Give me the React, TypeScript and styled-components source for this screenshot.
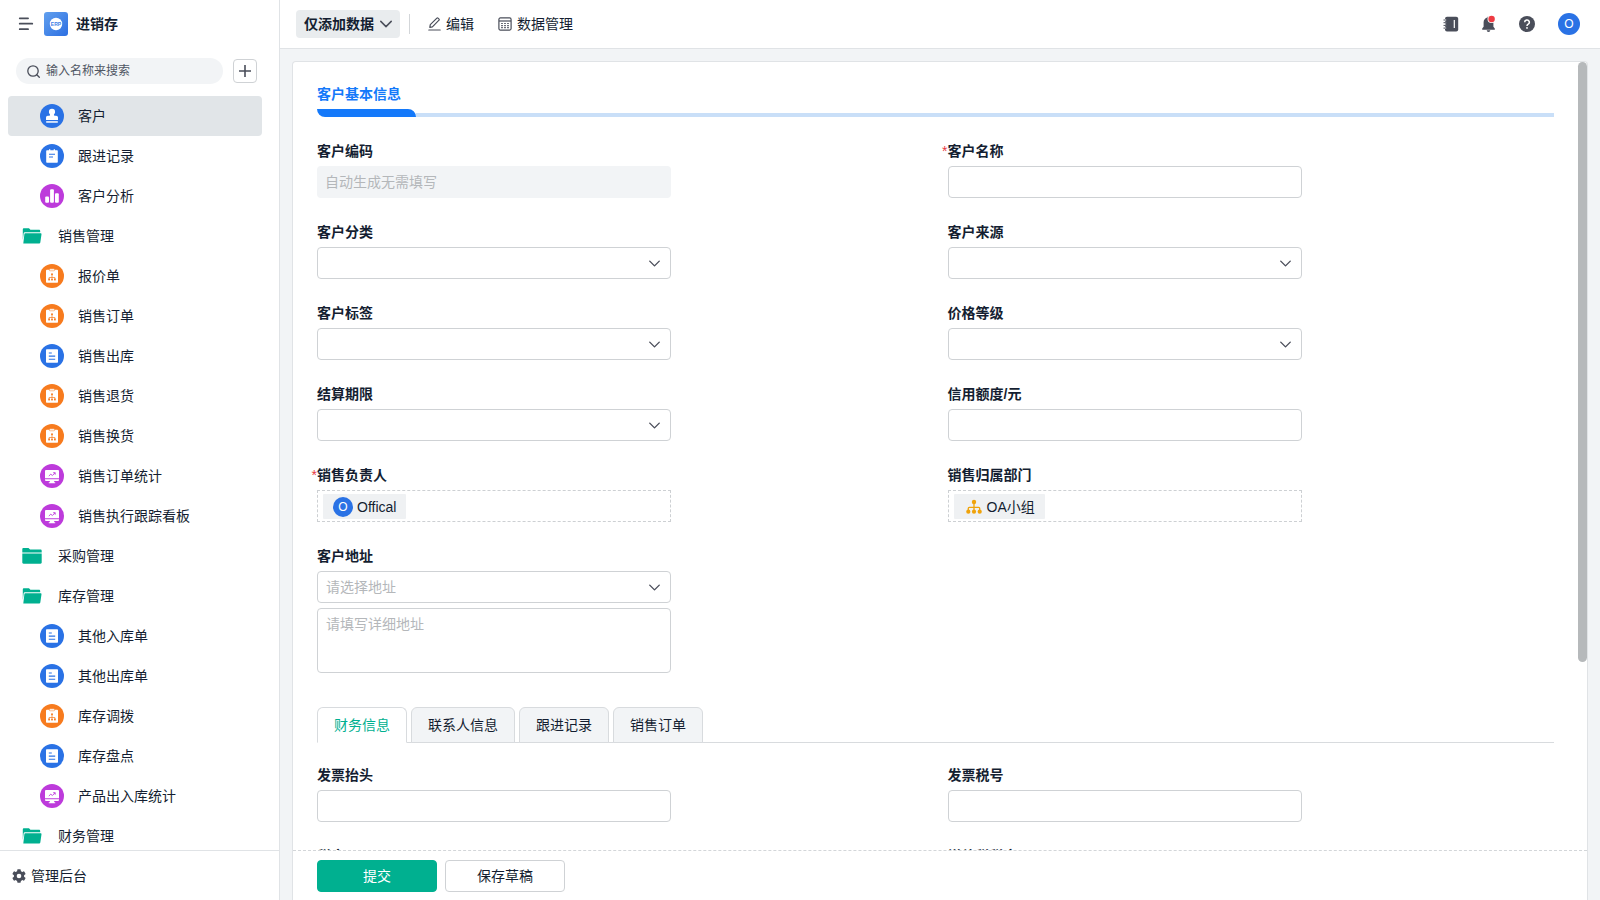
import React, { useState } from "react";
import styled, { createGlobalStyle, css } from "styled-components";

const color = {
  text: "#141e31",
  icon: "#4a4e5a",
  line: "#e0e3e6",
  fieldLine: "#cfd2d5",
  hint: "#b4b7ba",
  panel: "#f2f4f6",
  green: "#00b090",
  blue: "#2a72e5",
  azure: "#1479fa",
  orange: "#f77b1e",
  purple: "#bd3bdb",
};

const GlobalStyle = createGlobalStyle`
  *, *::before, *::after { box-sizing: border-box; }
  body {
    margin: 0;
    color: ${color.text};
    font: 14px/20px "Liberation Sans", "Noto Sans CJK SC", sans-serif;
  }
  button, input, select, textarea { font: inherit; color: inherit; }
  button { border: 0; padding: 0; background: none; cursor: pointer; }
`;

const Shell = styled.div`
  display: grid;
  grid-template-columns: 280px minmax(0, 1fr);
  height: 100vh;
  background: ${color.panel};
`;

/* ---------- sidebar ---------- */

const Sidebar = styled.aside`
  display: flex;
  flex-direction: column;
  min-height: 0;
  background: #fff;
  border-right: 1px solid ${color.line};
`;

const Brand = styled.div`
  display: flex;
  align-items: center;
  height: 48px;
  padding-left: 18px;
  flex: none;
`;

const IconButton = styled.button`
  display: flex;
  align-items: center;
  color: ${color.icon};
`;

const BrandLogo = styled.svg`
  margin: 0 8px 0 10px;
`;

const BrandName = styled.h1`
  margin: 0;
  font-size: 14px;
  line-height: 20px;
  font-weight: 700;
`;

const SearchRow = styled.div`
  display: flex;
  align-items: center;
  gap: 10px;
  padding: 10px 22px 12px 16px;
  flex: none;
`;

const SearchBox = styled.label`
  display: flex;
  align-items: center;
  flex: 1;
  gap: 6px;
  height: 26px;
  padding-left: 11px;
  border-radius: 13px;
  background: ${color.panel};
  color: ${color.icon};
`;

const SearchInput = styled.input`
  flex: 1;
  min-width: 0;
  padding: 0;
  border: 0;
  outline: 0;
  background: none;
  font-size: 12px;
  line-height: 20px;
  &::placeholder { color: #4f5663; opacity: 1; }
`;

const AddButton = styled(IconButton)`
  justify-content: center;
  width: 24px;
  height: 24px;
  border: 1px solid ${color.fieldLine};
  border-radius: 4px;
`;

const Nav = styled.nav`
  flex: 1;
  min-height: 0;
  overflow: hidden;
  padding: 0 17px 0 8px;
`;

const NavLink = styled.a<{ $folder?: boolean; $active?: boolean }>`
  display: flex;
  align-items: center;
  gap: ${(p) => (p.$folder ? 16 : 14)}px;
  height: 40px;
  padding-left: ${(p) => (p.$folder ? 14 : 32)}px;
  border-radius: 4px;
  background: ${(p) => (p.$active ? "#e1e5e8" : "transparent")};
  color: inherit;
  text-decoration: none;
`;

const AdminLink = styled.a`
  display: flex;
  align-items: center;
  gap: 5px;
  flex: none;
  height: 50px;
  padding-left: 12px;
  border-top: 1px solid ${color.line};
  color: inherit;
  text-decoration: none;
  svg { color: ${color.icon}; }
`;

/* ---------- top bar ---------- */

const Main = styled.main`
  display: flex;
  flex-direction: column;
  min-width: 0;
  min-height: 0;
`;

const TopBar = styled.header`
  display: flex;
  align-items: center;
  justify-content: space-between;
  flex: none;
  height: 49px;
  padding: 0 20px 0 16px;
  border-bottom: 1px solid ${color.line};
  background: #fff;
`;

const Tools = styled.div`
  display: flex;
  align-items: center;
  gap: 24px;
`;

const ModeButton = styled.button`
  display: flex;
  align-items: center;
  gap: 6px;
  height: 28px;
  padding: 0 8px;
  border-radius: 4px;
  background: #e9ecee;
  font-weight: 700;
  svg { color: ${color.icon}; }
`;

const ModeGroup = styled.div`
  display: flex;
  align-items: center;
  gap: 9px;
  margin-right: -6px;
`;

const Divider = styled.span`
  width: 1px;
  height: 20px;
  background: #d3d6d9;
`;

const ToolButton = styled.button`
  display: flex;
  align-items: center;
  gap: 5px;
  svg { color: ${color.icon}; }
`;

const Actions = styled.div`
  display: flex;
  align-items: center;
  gap: 22px;
`;

const Avatar = styled.span<{ $size: number }>`
  display: inline-flex;
  align-items: center;
  justify-content: center;
  width: ${(p) => p.$size}px;
  height: ${(p) => p.$size}px;
  border-radius: 50%;
  background: ${color.blue};
  color: #fff;
  font-size: 12px;
`;

const Account = styled.button`
  display: flex;
  margin-left: 1px;
`;

/* ---------- form card ---------- */

const Card = styled.form`
  position: relative;
  display: flex;
  flex-direction: column;
  flex: 1;
  min-height: 0;
  margin: 12px 12px 0;
  border: 1px solid ${color.line};
  border-bottom: 0;
  border-radius: 4px 4px 0 0;
  background: #fff;
`;

const ScrollArea = styled.div`
  flex: 1;
  min-height: 0;
  overflow: hidden;
  padding: 22px 33px 0 24px;
`;

const ScrollThumb = styled.div`
  position: absolute;
  top: 0;
  right: 0;
  width: 9px;
  height: 600px;
  border-radius: 5px;
  background: #b6b9bb;
`;

const SectionTitle = styled.h2`
  margin: 0 0 24px;
  font-size: 14px;
  line-height: 20px;
  font-weight: 700;
  color: ${color.azure};
`;

const SectionRule = styled.span`
  display: flex;
  align-items: flex-end;
  height: 8px;
  margin-top: 5px;
  &::before {
    content: "";
    width: 99px;
    height: 8px;
    border-radius: 0 8px 0 8px;
    background: ${color.azure};
  }
  &::after {
    content: "";
    flex: 1;
    height: 4px;
    background: #c9dff8;
  }
`;

const FieldGrid = styled.div`
  display: grid;
  grid-template-columns: repeat(2, minmax(0, 1fr));
  gap: 24px;
`;

const FieldBox = styled.div`
  display: flex;
  flex-direction: column;
  gap: 5px;
  max-width: 354px;
`;

const FieldLabel = styled.label<{ $required?: boolean }>`
  position: relative;
  font-weight: 700;
  ${(p) =>
    p.$required &&
    css`
      &::before {
        content: "*";
        position: absolute;
        right: 100%;
        color: #e8393f;
        font-weight: 400;
      }
    `}
`;

const control = css`
  display: block;
  width: 100%;
  border: 1px solid ${color.fieldLine};
  border-radius: 4px;
  background: #fff;
  padding: 0 8px;
  outline: 0;
  &::placeholder { color: ${color.hint}; opacity: 1; }
  &:focus { border-color: ${color.green}; }
`;

const TextInput = styled.input`
  ${control}
  height: 32px;
  &:disabled {
    border: 0;
    background: ${color.panel};
  }
`;

const SelectWrap = styled.div`
  position: relative;
  svg {
    position: absolute;
    right: 11px;
    top: 11px;
    color: ${color.icon};
    pointer-events: none;
  }
`;

const Select = styled.select<{ $hint?: boolean }>`
  ${control}
  appearance: none;
  height: 32px;
  color: ${(p) => (p.$hint ? color.hint : "inherit")};
`;

const TextArea = styled.textarea`
  ${control}
  height: 65px;
  padding: 5px 8px;
  resize: none;
`;

const MemberBox = styled.div`
  display: flex;
  align-items: flex-end;
  height: 32px;
  padding: 2px 5px;
  border: 1px dashed #cdd0d3;
`;

const Chip = styled.span<{ $org?: boolean }>`
  display: inline-flex;
  align-items: center;
  gap: ${(p) => (p.$org ? 5 : 4)}px;
  height: 25px;
  padding: 0 10px;
  background: #eff1f3;
  border-radius: 1px;
  svg { margin-left: 2px; }
`;

const TabList = styled.div`
  display: flex;
  gap: 4px;
  margin: 34px 0 22px;
  border-bottom: 1px solid #d8dbde;
`;

const Tab = styled.button<{ $active: boolean }>`
  height: 36px;
  margin-bottom: -1px;
  padding: 0 16px;
  border: 1px solid #d8dbde;
  border-bottom-color: ${(p) => (p.$active ? "#fff" : "#d8dbde")};
  border-radius: 6px 6px 0 0;
  background: ${(p) => (p.$active ? "#fff" : color.panel)};
  color: ${(p) => (p.$active ? color.green : "inherit")};
`;

const FormFooter = styled.footer`
  display: flex;
  gap: 8px;
  flex: none;
  height: 50px;
  padding: 9px 24px;
  border-top: 1px dashed #d3d6d9;
`;

const Button = styled.button<{ $primary?: boolean }>`
  width: 120px;
  height: 32px;
  border: 1px solid ${(p) => (p.$primary ? color.green : color.fieldLine)};
  border-radius: 4px;
  background: ${(p) => (p.$primary ? color.green : "#fff")};
  color: ${(p) => (p.$primary ? "#fff" : "inherit")};
`;

/* ---------- icons ---------- */

const Chevron = ({ size = 11 }: { size?: number }) => (
  <svg width={size} height={size} viewBox="0 0 12 12" fill="none" stroke="currentColor" strokeWidth="1.5" strokeLinecap="round" strokeLinejoin="round" aria-hidden>
    <path d="M0.8 3.4 6 8.6l5.2-5.2" />
  </svg>
);

type Kind = "stamp" | "note" | "bars" | "flow" | "doc" | "board";

const kindColor: Record<Kind, string> = {
  stamp: color.blue,
  note: color.blue,
  doc: color.blue,
  flow: color.orange,
  bars: color.purple,
  board: color.purple,
};

const KindIcon = ({ kind }: { kind: Kind }) => {
  const c = kindColor[kind];
  return (
    <svg width="24" height="24" viewBox="0 0 24 24" aria-hidden>
      <circle cx="12" cy="12" r="12" fill={c} />
      {kind === "stamp" && (
        <g fill="#fff">
          <path d="M12 4.8a3.1 3.1 0 0 1 3.1 3.1c0 1.5-1.2 2-1.2 3 0 .5.3.8 1 .8h1.300a1.800 1.800 0 0 1 1.800 1.800V16H6v-2.500a1.800 1.800 0 0 1 1.800-1.800h1.300c.7 0 1-.3 1-.8 0-1-1.200-1.500-1.200-3A3.1 3.1 0 0 1 12 4.8z" />
          <rect x="6.2" y="17.2" width="11.6" height="1.5" />
        </g>
      )}
      {kind === "note" && (
        <>
          <path d="M7 6.2h2v-1h1.3v1h3.4v-1H15v1h2a.8.8 0 0 1 .8.8v11a.8.8 0 0 1-.8.8H7a.8.8 0 0 1-.8-.8V7a.8.8 0 0 1 .8-.8z" fill="#fff" />
          <path d="M9 10.200h6M9 13h4" stroke={c} strokeWidth="1.1" />
        </>
      )}
      {kind === "bars" && (
        <g fill="#fff">
          <rect x="5.2" y="12.5" width="3.8" height="6.3" rx="1" />
          <rect x="10.1" y="5.2" width="3.8" height="13.6" rx="1" />
          <rect x="15" y="9.2" width="3.8" height="9.6" rx="1" />
        </g>
      )}
      {kind === "doc" && (
        <>
          <rect x="6" y="5.2" width="12" height="13.6" rx="0.8" fill="#fff" />
          <path d="M8.800 9h3M8.800 12.100h6.400M8.800 15.200h6.400" stroke={c} strokeWidth="1.1" />
        </>
      )}
      {kind === "flow" && (
        <>
          <rect x="6" y="5.8" width="12" height="13" rx="0.8" fill="#fff" />
          <rect x="9.400" y="4.800" width="5.2" height="2" rx="0.6" fill="#fff" stroke={c} strokeWidth="0.5" />
          <path d="M12 10.500v3.800M9.100 15.200v-1.700h5.800v1.700" stroke={c} strokeWidth="0.7" fill="none" />
          <g fill={c}>
            <circle cx="12" cy="10.3" r="1" />
            <rect x="8.2" y="14.6" width="1.8" height="1.8" />
            <rect x="11.1" y="14.6" width="1.8" height="1.8" />
            <rect x="14" y="14.6" width="1.8" height="1.8" />
          </g>
        </>
      )}
      {kind === "board" && (
        <>
          <path d="M6 6h12a1 1 0 0 1 1 1v7.300H5V7a1 1 0 0 1 1-1z" fill="#fff" />
          <path d="M5 15.200h14v.8a1 1 0 0 1-1 1h-3.800v1.200h1v1H8.800v-1h1V17H6a1 1 0 0 1-1-1z" fill="#fff" />
          <path d="m8.800 12 2-1.800 1.600 1.300 2.600-2.600m-1.800-.2h2v2" stroke={c} strokeWidth="0.9" fill="none" />
        </>
      )}
    </svg>
  );
};

const FolderIcon = ({ open }: { open: boolean }) => (
  <svg width="20" height="20" viewBox="0 0 20 20" fill={color.green} aria-hidden>
    {open ? (
      <>
        <path d="M0.800 14V3.500c0-.7.500-1.200 1.200-1.200h5l1.400 1.500H17c.7 0 1.200.5 1.200 1.200v1.200H2.800c-.6 0-1 .4-1.100.9z" />
        <path d="M3.300 7.200h15.300c.6 0 1 .5.900 1.100l-1.200 8.200c-.1.600-.5 1-1.100 1H1.300l1.100-9.500c0-.5.400-.8.900-.8z" />
      </>
    ) : (
      <>
        <path d="M0.300 6.400V3.300c0-.7.500-1.200 1.200-1.200h5l1.600 1.500h10.400c.7 0 1.200.5 1.200 1.200v1.600z" />
        <path d="M0.300 7.400h19.400v9.100c0 .7-.5 1.200-1.200 1.200h-17c-.7 0-1.200-.5-1.200-1.200z" />
      </>
    )}
  </svg>
);

const OrgIcon = () => (
  <svg width="16" height="16" viewBox="0 0 16 16" aria-hidden>
    <path d="M8 3v10M2.300 13V9.300c0-.6.400-1 1-1h9.400c.6 0 1 .4 1 1V13" stroke="#f0a30a" strokeWidth="1.3" fill="none" />
    <g fill="#f0a30a">
      <circle cx="8" cy="3" r="2.2" />
      <circle cx="2.3" cy="12.7" r="2.1" />
      <circle cx="8" cy="12.7" r="2.1" />
      <circle cx="13.7" cy="12.7" r="2.1" />
    </g>
  </svg>
);

const MenuIcon = () => (
  <svg width="16" height="16" viewBox="0 0 16 16" stroke="currentColor" strokeWidth="1.7" strokeLinecap="round" aria-hidden>
    <path d="M1.700 2.300h8.400M1.700 7.700h12.600M1.700 13.200h8.400" />
  </svg>
);

const SearchIcon = () => (
  <svg width="13" height="13" viewBox="0 0 13 13" fill="none" stroke="currentColor" strokeWidth="1.3" strokeLinecap="round" aria-hidden>
    <circle cx="6" cy="6" r="5.200" />
    <path d="m9.800 9.800 2.500 2.500" />
  </svg>
);

const PlusIcon = () => (
  <svg width="12" height="12" viewBox="0 0 12 12" stroke="currentColor" strokeWidth="1.6" aria-hidden>
    <path d="M6 0v12M0 6h12" />
  </svg>
);

const GearIcon = () => (
  <svg width="14" height="14" viewBox="0 0 14 14" aria-hidden>
    <g fill="currentColor">
      <circle cx="7" cy="7" r="5.2" />
      {[0, 60, 120].map((a) => (
        <rect key={a} x="5.2" y="0.2" width="3.6" height="13.6" rx="0.8" transform={`rotate(${a} 7 7)`} />
      ))}
    </g>
    <circle cx="7" cy="7" r="2.3" fill="#fff" />
  </svg>
);

const PenIcon = () => (
  <svg width="13" height="14" viewBox="0 0 13 14" fill="none" stroke="currentColor" strokeWidth="1.2" strokeLinejoin="round" strokeLinecap="round" aria-hidden>
    <path d="M1.800 10.300 2.300 7.700 8.900 1.100a.8.8 0 0 1 1.100 0l1 1a.8.8 0 0 1 0 1.100L4.400 9.800z" />
    <path d="M0.800 13h11.400" />
  </svg>
);

const TableIcon = () => (
  <svg width="14" height="14" viewBox="0 0 14 14" fill="none" stroke="currentColor" strokeWidth="1.2" aria-hidden>
    <rect x="0.900" y="0.900" width="12.200" height="12.200" rx="1.5" />
    <path d="M1 4h12" />
    <path d="M3.200 6.500h7.800M3.200 8.600h7.800M3.200 10.700h7.800" strokeWidth="1.2" strokeDasharray="1.600 1.400" />
  </svg>
);

const NotebookIcon = () => (
  <svg width="16" height="16" viewBox="0 0 16 16" aria-hidden>
    <rect x="2" y="0.8" width="13.2" height="14.6" rx="2" fill="currentColor" />
    <path d="M0.500 4h2.600M0.500 6.700h2.600M0.500 9.400h2.600M0.500 12.100h2.600" stroke="#fff" strokeWidth="1.8" />
    <path d="M0.500 4h2.600M0.500 6.700h2.600M0.500 9.400h2.600M0.500 12.100h2.600" stroke="currentColor" strokeWidth="1" />
    <path d="M11.300 4v8" stroke="#fff" strokeWidth="1.2" />
  </svg>
);

const BellIcon = () => (
  <svg width="16" height="18" viewBox="0 0 16 18" aria-hidden>
    <path d="M7.500 1.500c.6 0 1 .4 1 1 2.300.5 3.900 2.400 3.900 4.800v4.400l1.400 1.800v1.300H1.200v-1.300l1.400-1.800V7.300c0-2.400 1.600-4.300 3.900-4.800 0-.6.400-1 1-1zM5.700 15.200h3.600a1.800 1.800 0 0 1-3.600 0z" fill="currentColor" />
    <circle cx="10.600" cy="4" r="4.1" fill="#fff" />
    <circle cx="10.600" cy="4" r="3.2" fill="#ee3b43" />
  </svg>
);

const HelpIcon = () => (
  <svg width="16" height="16" viewBox="0 0 16 16" aria-hidden>
    <circle cx="8" cy="8" r="8" fill="currentColor" />
    <path d="M5.700 6.300a2.300 2.300 0 1 1 3.500 1.900c-.8.500-1.200.8-1.200 1.700" stroke="#fff" strokeWidth="1.5" fill="none" />
    <circle cx="8" cy="11.9" r="0.9" fill="#fff" />
  </svg>
);

/* ---------- data ---------- */

type NavEntry = { label: string; kind?: Kind; open?: boolean };

const navEntries: NavEntry[] = [
  { label: "客户", kind: "stamp" },
  { label: "跟进记录", kind: "note" },
  { label: "客户分析", kind: "bars" },
  { label: "销售管理", open: true },
  { label: "报价单", kind: "flow" },
  { label: "销售订单", kind: "flow" },
  { label: "销售出库", kind: "doc" },
  { label: "销售退货", kind: "flow" },
  { label: "销售换货", kind: "flow" },
  { label: "销售订单统计", kind: "board" },
  { label: "销售执行跟踪看板", kind: "board" },
  { label: "采购管理", open: false },
  { label: "库存管理", open: true },
  { label: "其他入库单", kind: "doc" },
  { label: "其他出库单", kind: "doc" },
  { label: "库存调拨", kind: "flow" },
  { label: "库存盘点", kind: "doc" },
  { label: "产品出入库统计", kind: "board" },
  { label: "财务管理", open: true },
];

const tabs = ["财务信息", "联系人信息", "跟进记录", "销售订单"];

/* ---------- fields ---------- */

type FieldProps = { id: string; label: string; required?: boolean; children: React.ReactNode };

const Field = ({ id, label, required, children }: FieldProps) => (
  <FieldBox>
    <FieldLabel htmlFor={id} id={`${id}-label`} $required={required}>
      {label}
    </FieldLabel>
    {children}
  </FieldBox>
);

const InputField = ({ id, label, required }: { id: string; label: string; required?: boolean }) => (
  <Field id={id} label={label} required={required}>
    <TextInput id={id} />
  </Field>
);

const SelectBox = ({ id, hint }: { id: string; hint?: string }) => (
  <SelectWrap>
    <Select id={id} $hint={!!hint} defaultValue="">
      <option value="">{hint ?? ""}</option>
    </Select>
    <Chevron />
  </SelectWrap>
);

const SelectField = ({ id, label }: { id: string; label: string }) => (
  <Field id={id} label={label}>
    <SelectBox id={id} />
  </Field>
);

export default function App() {
  const [active, setActive] = useState(0);
  return (
    <>
      <GlobalStyle />
      <Shell>
        <Sidebar>
          <Brand>
            <IconButton type="button" aria-label="菜单">
              <MenuIcon />
            </IconButton>
            <BrandLogo width="24" height="24" viewBox="0 0 24 24" aria-hidden>
              <defs>
                <linearGradient id="logo" x1="0" y1="0" x2="1" y2="1">
                  <stop offset="0" stopColor="#62a0ee" />
                  <stop offset="1" stopColor="#2c6fe2" />
                </linearGradient>
              </defs>
              <rect width="24" height="24" rx="3" fill="url(#logo)" />
              <circle cx="12" cy="12" r="6.2" fill="#fff" />
              <text x="12" y="13.8" textAnchor="middle" fontSize="5" fontWeight="700" fill="#3f7fe6">ERP</text>
            </BrandLogo>
            <BrandName>进销存</BrandName>
          </Brand>
          <SearchRow>
            <SearchBox>
              <SearchIcon />
              <SearchInput placeholder="输入名称来搜索" aria-label="搜索" />
            </SearchBox>
            <AddButton type="button" aria-label="新建">
              <PlusIcon />
            </AddButton>
          </SearchRow>
          <Nav>
            {navEntries.map((e, i) => (
              <NavLink key={e.label} href="#" $folder={!e.kind} $active={i === 0}>
                {e.kind ? <KindIcon kind={e.kind} /> : <FolderIcon open={!!e.open} />}
                {e.label}
              </NavLink>
            ))}
          </Nav>
          <AdminLink href="#">
            <GearIcon />
            管理后台
          </AdminLink>
        </Sidebar>

        <Main>
          <TopBar>
            <Tools>
              <ModeGroup>
                <ModeButton type="button">
                  仅添加数据
                  <Chevron size={12} />
                </ModeButton>
                <Divider />
              </ModeGroup>
              <ToolButton type="button">
                <PenIcon />
                编辑
              </ToolButton>
              <ToolButton type="button">
                <TableIcon />
                数据管理
              </ToolButton>
            </Tools>
            <Actions>
              <IconButton type="button" aria-label="通讯录">
                <NotebookIcon />
              </IconButton>
              <IconButton type="button" aria-label="消息">
                <BellIcon />
              </IconButton>
              <IconButton type="button" aria-label="帮助">
                <HelpIcon />
              </IconButton>
              <Account type="button">
                <Avatar $size={22}>O</Avatar>
              </Account>
            </Actions>
          </TopBar>

          <Card onSubmit={(e) => e.preventDefault()}>
            <ScrollArea>
              <SectionTitle>
                客户基本信息
                <SectionRule />
              </SectionTitle>
              <FieldGrid>
                <Field id="code" label="客户编码">
                  <TextInput id="code" disabled placeholder="自动生成无需填写" />
                </Field>
                <InputField id="name" label="客户名称" required />
                <SelectField id="category" label="客户分类" />
                <SelectField id="source" label="客户来源" />
                <SelectField id="tag" label="客户标签" />
                <SelectField id="level" label="价格等级" />
                <SelectField id="term" label="结算期限" />
                <InputField id="credit" label="信用额度/元" />
                <Field id="owner" label="销售负责人" required>
                  <MemberBox id="owner" role="group" aria-labelledby="owner-label">
                    <Chip>
                      <Avatar $size={20}>O</Avatar>
                      Offical
                    </Chip>
                  </MemberBox>
                </Field>
                <Field id="dept" label="销售归属部门">
                  <MemberBox id="dept" role="group" aria-labelledby="dept-label">
                    <Chip $org>
                      <OrgIcon />
                      OA小组
                    </Chip>
                  </MemberBox>
                </Field>
                <Field id="address" label="客户地址">
                  <SelectBox id="address" hint="请选择地址" />
                  <TextArea aria-label="详细地址" placeholder="请填写详细地址" />
                </Field>
              </FieldGrid>
              <TabList role="tablist">
                {tabs.map((t, i) => (
                  <Tab key={t} type="button" role="tab" aria-selected={i === active} $active={i === active} onClick={() => setActive(i)}>
                    {t}
                  </Tab>
                ))}
              </TabList>
              <FieldGrid>
                <InputField id="title" label="发票抬头" />
                <InputField id="taxno" label="发票税号" />
                <InputField id="rate" label="税率" />
                <InputField id="vat" label="增值税税率" />
              </FieldGrid>
            </ScrollArea>
            <ScrollThumb />
            <FormFooter>
              <Button type="submit" $primary>
                提交
              </Button>
              <Button type="button">保存草稿</Button>
            </FormFooter>
          </Card>
        </Main>
      </Shell>
    </>
  );
}
